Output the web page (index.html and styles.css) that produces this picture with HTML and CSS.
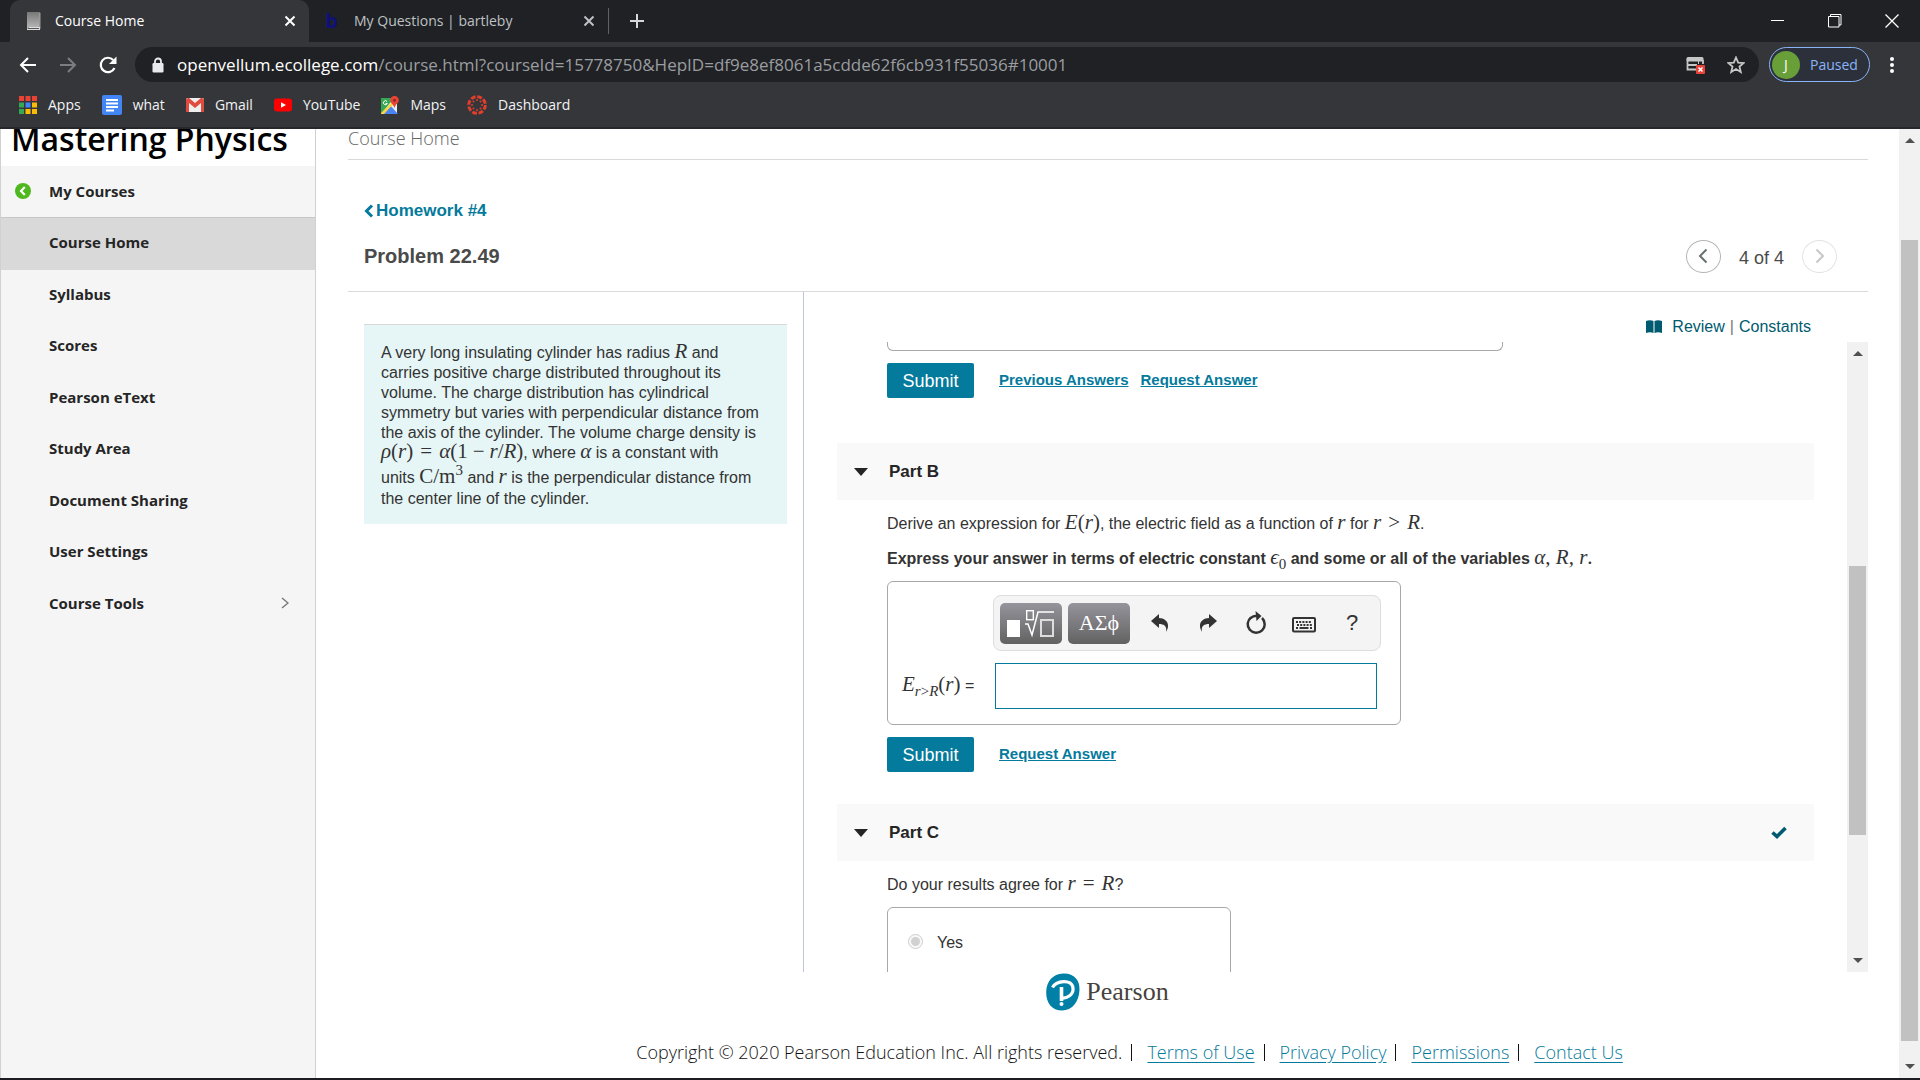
FILE: index.html
```html
<!DOCTYPE html>
<html lang="en">
<head>
<meta charset="utf-8">
<title>Course Home</title>
<link rel="stylesheet" href="styles.css">
</head>
<body>
<header class="browser">
  <div class="tabstrip">
    <div class="tab tab-active">
      <svg class="tab-icon" width="16" height="20" viewBox="0 0 16 20"><defs><linearGradient id="bk" x1="0" y1="0" x2="0" y2="1"><stop offset="0" stop-color="#777"/><stop offset="1" stop-color="#bbb"/></linearGradient></defs><path d="M1 1h12v15H3l-2 2z" fill="url(#bk)"/><path d="M13 1l1.500 1v16H13z" fill="#999"/><path d="M1 18l2-2h11v3H1z" fill="#ddd"/><path d="M2 17.500h11" stroke="#555"/></svg>
      <span class="tab-title">Course Home</span>
      <button class="icon-btn" aria-label="Close tab"><svg width="12" height="12" viewBox="0 0 12 12"><path d="M1.500 1.500l9 9M10.500 1.500l-9 9" stroke="#fff" stroke-width="2"/></svg></button>
    </div>
    <div class="tab">
      <span class="tab-icon tab-b">b</span>
      <span class="tab-title">My Questions | bartleby</span>
      <button class="icon-btn" aria-label="Close tab"><svg width="12" height="12" viewBox="0 0 12 12"><path d="M1.500 1.500l9 9M10.500 1.500l-9 9" stroke="#bdc1c6" stroke-width="2"/></svg></button>
    </div>
    <button class="icon-btn new-tab" aria-label="New tab"><svg width="16" height="16" viewBox="0 0 16 16"><path d="M8 1v14M1 8h14" stroke="#d5d7da" stroke-width="2"/></svg></button>
    <div class="window-controls">
      <button class="icon-btn" aria-label="Minimize"><svg width="14" height="14" viewBox="0 0 14 14"><path d="M0 6.500h13" stroke="#fff"/></svg></button>
      <button class="icon-btn" aria-label="Restore"><svg width="14" height="14" viewBox="0 0 14 14"><path d="M.5 2.500h10.500v10.500H.5zM2.500 2.500v-2h10.500v10.500h-2" fill="none" stroke="#fff"/></svg></button>
      <button class="icon-btn" aria-label="Close"><svg width="14" height="14" viewBox="0 0 14 14"><path d="M.5.500l13 13M13.500.500l-13 13" stroke="#fff" stroke-width="1.300"/></svg></button>
    </div>
  </div>
  <div class="toolbar">
    <button class="icon-btn" aria-label="Back"><svg width="18" height="18" viewBox="0 0 18 18"><path d="M17 9H2M9 2L2 9l7 7" fill="none" stroke="#fff" stroke-width="2"/></svg></button>
    <button class="icon-btn" aria-label="Forward"><svg width="18" height="18" viewBox="0 0 18 18"><path d="M1 9h15M9 2l7 7-7 7" fill="none" stroke="#7b7d80" stroke-width="2"/></svg></button>
    <button class="icon-btn" aria-label="Reload"><svg width="18" height="18" viewBox="0 0 18 18"><path d="M15.500 12A7.200 7.200 0 1 1 14.200 4" fill="none" stroke="#fff" stroke-width="2.200"/><path d="M17.500.5v7.500H10z" fill="#fff"/></svg></button>
    <div class="omnibox">
      <svg class="lock" width="12" height="16" viewBox="0 0 12 16"><path d="M3 7V4.500a3 3 0 0 1 6 0V7" fill="none" stroke="#e8eaed" stroke-width="1.800"/><rect x="0.500" y="6" width="11" height="9.500" rx="1.200" fill="#e8eaed"/></svg>
      <span class="url"><b>openvellum.ecollege.com</b>/course.html?courseId=15778750&amp;HepID=df9e8ef8061a5cdde62f6cb931f55036#10001</span>
      <button class="icon-btn" aria-label="Cookies blocked"><svg width="19" height="18" viewBox="0 0 19 18"><path d="M1.500 3v10.500H11M1 9h10M17 4v4" fill="none" stroke="#c4c7c5" stroke-width="1.800"/><rect x="0.500" y="1" width="17" height="4.500" rx="1.500" fill="#c4c7c5"/><path d="M12.500 5v3" stroke="#c4c7c5"/><rect x="10" y="9" width="9" height="9" rx="1" fill="#e8433a"/><path d="M12.500 11.500l4 4M16.500 11.500l-4 4" stroke="#fff" stroke-width="1.500"/></svg></button>
      <button class="icon-btn" aria-label="Bookmark"><svg width="18" height="18" viewBox="0 0 18 18"><path d="M9 1.500l2.200 5.100 5.500.4-4.200 3.600 1.300 5.400L9 13.100 4.200 16l1.300-5.400L1.300 7l5.500-.4z" fill="none" stroke="#c4c7c5" stroke-width="1.800"/></svg></button>
    </div>
    <button class="profile"><span class="avatar">J</span>Paused</button>
    <button class="icon-btn menu" aria-label="Menu"><svg width="4" height="16" viewBox="0 0 4 16"><circle cx="2" cy="2" r="2" fill="#fff"/><circle cx="2" cy="8" r="2" fill="#fff"/><circle cx="2" cy="14" r="2" fill="#fff"/></svg></button>
  </div>
  <nav class="bookmarks">
    <a href="#"><svg width="18" height="18" viewBox="0 0 18 18"><path d="M0 0h5v5H0zM6.500 0h5v5h-5zM13 0h5v5h-5z" fill="#ea4335"/><path d="M0 6.500h5v5H0zM0 13h5v5H0z" fill="#34a853"/><path d="M6.500 6.500h5v5h-5z" fill="#4285f4"/><path d="M13 6.500h5v5h-5zM6.500 13h5v5h-5zM13 13h5v5h-5z" fill="#fbbc05"/></svg>Apps</a>
    <a href="#"><svg width="20" height="20" viewBox="0 0 20 20"><rect width="20" height="20" rx="2" fill="#4285f4"/><path d="M4 5h12M4 8.500h12M4 12h12M4 15.500h8" stroke="#fff" stroke-width="1.800"/></svg>what</a>
    <a href="#"><svg width="18" height="18" viewBox="0 0 18 18"><rect y="2" width="18" height="14" rx="1.500" fill="#eee"/><path d="M0 3.500V16h3V7l6 5 6-5v9h3V3.500Q17 1.500 15 2L9 7 3 2Q1 1.500 0 3.500z" fill="#e04a3f"/></svg>Gmail</a>
    <a href="#"><svg width="18" height="18" viewBox="0 0 18 18"><rect y="2.500" width="18" height="13" rx="3" fill="#f00"/><path d="M7 6.200v5.600L12 9z" fill="#fff"/></svg>YouTube</a>
    <a href="#"><svg width="18" height="18" viewBox="0 0 18 18"><rect x="0" y="2" width="16" height="16" rx="1" fill="#eceff1"/><path d="M0 2h13L1 17H0z" fill="#34a853"/><path d="M0 18L9 9l8 9z" fill="#4a84f4"/><path d="M0 17L11 6l2 2L3 18H0z" fill="#fdd446"/><path d="M4 18L9.500 11l5 7z" fill="#4a84f4"/><path d="M13.500 0a4.200 4.200 0 0 0-4.200 4.300c0 3 3.200 3.700 4.200 8 1-4.300 4.300-5 4.300-8A4.200 4.200 0 0 0 13.500 0z" fill="#ea4335"/><circle cx="13.500" cy="4.300" r="1.500" fill="#8c2a22"/><path d="M6 5.500a2 2 0 1 0 .3 2H4.500" stroke="#fff" fill="none"/></svg>Maps</a>
    <a href="#"><svg width="20" height="20" viewBox="0 0 20 20"><circle cx="10" cy="10" r="8.300" fill="none" stroke="#e13f2b" stroke-width="3" stroke-dasharray="4.800 1.720"/><g fill="#e13f2b"><circle cx="10" cy="5" r="1"/><circle cx="10" cy="15" r="1"/><circle cx="5" cy="10" r="1"/><circle cx="15" cy="10" r="1"/><circle cx="6.500" cy="6.500" r="1"/><circle cx="13.500" cy="6.500" r="1"/><circle cx="6.500" cy="13.500" r="1"/><circle cx="13.500" cy="13.500" r="1"/></g></svg>Dashboard</a>
  </nav>
</header>

<div class="page">
  <aside class="sidebar">
    <h1 class="brand">Mastering Physics</h1>
    <a class="my-courses" href="#"><svg width="16" height="16" viewBox="0 0 16 16"><circle cx="8" cy="8" r="8" fill="#4fb81f"/><path d="M9.800 4L6 8l3.800 4" fill="none" stroke="#fff" stroke-width="2.200"/></svg>My Courses</a>
    <nav class="side-nav">
      <a class="current" href="#">Course Home</a>
      <a href="#">Syllabus</a>
      <a href="#">Scores</a>
      <a href="#">Pearson eText</a>
      <a href="#">Study Area</a>
      <a href="#">Document Sharing</a>
      <a href="#">User Settings</a>
      <a href="#">Course Tools<svg width="8" height="12" viewBox="0 0 8 12"><path d="M1 1l6 5-6 5" fill="none" stroke="#777" stroke-width="1.400"/></svg></a>
    </nav>
  </aside>

  <main class="content">
    <h2 class="page-title">Course Home</h2>
    <section class="problem-head">
      <a class="back-link" href="#"><svg width="10" height="14" viewBox="0 0 10 14"><path d="M8 1.500L2.500 7 8 12.500" fill="none" stroke="#047a9c" stroke-width="3"/></svg>Homework #4</a>
      <div class="problem-row">
        <h3>Problem 22.49</h3>
        <div class="pager">
          <button aria-label="Previous"><svg width="10" height="16" viewBox="0 0 10 16"><path d="M8.500 1.500L2 8l6.500 6.500" fill="none" stroke="#6a7070" stroke-width="2"/></svg></button>
          <span>4 of 4</span>
          <button disabled aria-label="Next"><svg width="10" height="16" viewBox="0 0 10 16"><path d="M1.500 1.500L8 8l-6.500 6.500" fill="none" stroke="#c7c7c7" stroke-width="2"/></svg></button>
        </div>
      </div>
    </section>

    <div class="workspace">
      <div class="statement-col">
        <p class="statement">A very long insulating cylinder has radius <i class="m">R</i> and carries positive charge distributed throughout its volume. The charge distribution has cylindrical symmetry but varies with perpendicular distance from the axis of the cylinder. The volume charge density is <span class="m nowrap"><i>ρ</i>(<i>r</i>)<span class="rel">=</span><i>α</i>(1<span class="bin">−</span><i>r</i>/<i>R</i>)</span>, where <i class="m">α</i> is a constant with<br>units <span class="m cubed">C/m<sup>3</sup></span> and <i class="m">r</i> is the perpendicular distance from the center line of the cylinder.</p>
      </div>
      <div class="parts-col">
        <div class="refs"><svg width="16" height="14" viewBox="0 0 16 14"><path d="M0 1q4-1.500 7.500 0v12q-3.500-1.300-7.500 0zM8.500 1q3.500-1.500 7.500 0v12q-4-1.300-7.500 0z" fill="#005a70"/></svg><a href="#">Review</a><span>|</span><a href="#">Constants</a></div>
        <div class="scroller">
          <div class="parts">
            <div class="answer-tail"></div>
            <div class="actions"><button class="submit">Submit</button><a href="#">Previous Answers</a><a href="#">Request Answer</a></div>

            <h4 class="part-head"><svg class="caret" width="14" height="8" viewBox="0 0 14 8"><path d="M0 0h14L7 8z" fill="#252525"/></svg>Part B</h4>
            <div class="part-body">
              <p class="question">Derive an expression for <span class="m"><i>E</i>(<i>r</i>)</span>, the electric field as a function of <i class="m">r</i> for <span class="m"><i>r</i><span class="rel">&gt;</span><i>R</i></span>.</p>
              <p class="hint">Express your answer in terms of electric constant <span class="m"><i>ϵ</i><sub>0</sub></span> and some or all of the variables <span class="m"><i>α</i>, <i>R</i>, <i>r</i>.</span></p>
              <div class="answer-box">
                <div class="mathbar">
                  <button class="palette" aria-label="Templates"><svg width="50" height="30" viewBox="0 0 50 30"><rect x="1" y="12" width="13" height="17" fill="#fff"/><path d="M19 16h3l4 11 6-23h16" fill="none" stroke="#fff" stroke-width="1.500"/><rect x="20.700" y="2.700" width="6.600" height="9" fill="none" stroke="#fff" stroke-width="1.400"/><rect x="35" y="12" width="12" height="16" fill="none" stroke="#ddd" stroke-width="2"/></svg></button>
                  <button class="palette">ΑΣϕ</button>
                  <button class="tool" aria-label="Undo"><svg width="18" height="20" viewBox="0 0 18 20"><path d="M0 8l8-7v4c7 0 12 6 7 14 1-5-1-8-7-8v4z" fill="#333"/></svg></button>
                  <button class="tool" aria-label="Redo"><svg width="18" height="20" viewBox="0 0 18 20"><path d="M18 8l-8-7v4C3 5-2 11 3 19c-1-5 1-8 7-8v4z" fill="#333"/></svg></button>
                  <button class="tool" aria-label="Reset"><svg width="20" height="24" viewBox="0 0 20 24"><path d="M5 6.500A8.500 8.500 0 1 0 16 7" fill="none" stroke="#333" stroke-width="2.500"/><path d="M9.500 0l6 5-5 5z" fill="#333"/><path d="M4.500 7.200Q7 4.800 11 4.800" fill="none" stroke="#333" stroke-width="2.500"/></svg></button>
                  <button class="tool" aria-label="Keyboard shortcuts"><svg width="24" height="20" viewBox="0 0 24 20"><rect x="1" y="5" width="22" height="13.500" rx="1" fill="none" stroke="#333" stroke-width="2"/><path d="M4 9h16M5 12h15M4 15h2M18 15h2" stroke="#333" stroke-width="2" stroke-dasharray="2 1.200"/><path d="M7.500 15h9" stroke="#333" stroke-width="2"/></svg></button>
                  <button class="tool help" aria-label="Help">?</button>
                </div>
                <label for="answer"><span class="m"><i>E</i><sub><i>r</i>&gt;<i>R</i></sub>(<i>r</i>)</span> =</label>
                <input id="answer" type="text">
              </div>
              <div class="actions"><button class="submit">Submit</button><a href="#">Request Answer</a></div>
            </div>

            <h4 class="part-head"><svg class="caret" width="14" height="8" viewBox="0 0 14 8"><path d="M0 0h14L7 8z" fill="#252525"/></svg>Part C<svg class="done" width="16" height="13" viewBox="0 0 16 13"><path d="M1.500 6.500l4.500 4L14.500 2" fill="none" stroke="#005a70" stroke-width="3.600"/></svg></h4>
            <div class="part-body">
              <p class="question">Do your results agree for <span class="m"><i>r</i><span class="rel">=</span><i>R</i></span>?</p>
              <div class="choices">
                <label><input type="radio" name="agree" checked disabled>Yes</label>
                <label><input type="radio" name="agree" aria-label="No" disabled></label>
              </div>
            </div>
          </div>
          <div class="scrollbar"><span class="arrow up"></span><span class="thumb"></span><span class="arrow down"></span></div>
        </div>
      </div>
    </div>

    <footer class="footer">
      <div class="pearson"><svg width="34" height="38" viewBox="0 0 34 38"><path d="M17 .5C28 0 34 7 33.500 17 33 29 26 37.500 16 37.500 6 37.500 0 30 .2 19 .5 8 7 1 17 .5z" fill="#0080a7"/><path d="M6.500 14.500C10 7.500 26 5.500 27 15c.7 7-6 10.500-11.500 10" fill="none" stroke="#fff" stroke-width="3.200"/><path d="M15.500 14v14" stroke="#fff" stroke-width="3.600"/><circle cx="15.500" cy="31" r="2" fill="#fff"/></svg><span>Pearson</span></div>
      <div class="legal"><span class="copyright">Copyright © 2020 Pearson Education Inc. All rights reserved.</span><a href="#">Terms of Use</a><a href="#">Privacy Policy</a><a href="#">Permissions</a><a href="#">Contact Us</a></div>
    </footer>
  </main>
  <div class="scrollbar page-scroll"><span class="arrow up"></span><span class="thumb"></span><span class="arrow down"></span></div>
</div>
</body>
</html>
```
FILE: styles.css
```css
* { box-sizing: border-box; }
body {
  margin: 0;
  height: 100vh;
  display: flex;
  flex-direction: column;
  border-bottom: 2px solid #1d1c21;
  background: #fff;
  color: #333;
  font: 16px/20px "Liberation Sans", Arial, sans-serif;
  overflow: hidden;
}
h1, h2, h3, h4, p { margin: 0; }
a { color: inherit; text-decoration: none; }
svg { display: block; flex: none; }
button { font: inherit; cursor: pointer; }
.icon-btn { display: flex; align-items: center; justify-content: center; padding: 0; border: 0; background: none; }

/* Browser frame */
.browser { flex: none; background: #35363a; border-bottom: 2px solid #27282b; font-family: "Open Sans", "Noto Sans", sans-serif; font-size: 15px; color: #f1f3f4; }
.tabstrip { display: flex; align-items: center; height: 42px; padding-left: 10px; background: #202124; color: #bdc1c6; }
.tab { display: flex; align-items: center; width: 299px; height: 42px; padding: 0 13px 0 16px; font-size: 14px; }
.tab-active { background: #35363a; color: #fff; border-radius: 10px 10px 0 0; }
.tab-icon { width: 16px; margin-right: 13px; }
.tab-b { color: #10107c; font: bold 20px/20px "Open Sans", sans-serif; }
.tab-title { flex: 1; white-space: nowrap; }
.new-tab { width: 56px; height: 26px; border-left: 1px solid #5f6165; }
.window-controls { display: flex; margin-left: auto; }
.window-controls .icon-btn { width: 57px; height: 38px; }
.toolbar { display: flex; align-items: center; height: 45px; padding: 0 26px 0 19px; gap: 22px; }
.omnibox { flex: 1; display: flex; align-items: center; gap: 22px; height: 35px; margin-left: -4px; margin-right: -12px; padding: 0 14px 0 17px; border-radius: 18px; background: #202124; }
.lock { margin-right: -9px; }
.url { flex: 1; font-size: 17px; color: #9a9da1; white-space: nowrap; }
.url b { font-weight: 400; color: #fff; }
.profile { display: flex; align-items: center; gap: 10px; width: 101px; height: 35px; padding: 0 0 0 2px; border: 1px solid #8ab4f8; border-radius: 18px; background: #2b303b; color: #8ab4f8; font-size: 14px; }
.avatar { width: 28px; height: 28px; border-radius: 50%; background: #689f38; color: #fff; line-height: 28px; text-align: center; }
.menu { margin-left: -2px; }
.bookmarks { display: flex; align-items: center; gap: 21px; height: 40px; padding: 0 19px 4px; }
.bookmarks a { display: flex; align-items: center; gap: 11px; font-size: 14px; }

/* Page frame */
.page { flex: 1; min-height: 0; display: flex; background: #fff; overflow: hidden; }
.sidebar { flex: none; width: 316px; border: solid #d1d1d1; border-width: 0 1px; background: #f5f5f5; font-family: "Open Sans", sans-serif; color: #252525; }
.brand { display: flex; align-items: flex-end; height: 37px; padding: 0 10px 7px; background: #fff; color: #000; font-size: 32px; font-weight: 600; line-height: 40px; white-space: nowrap; overflow: hidden; }
.my-courses { display: flex; align-items: center; gap: 18px; height: 52px; padding: 0 0 2px 14px; border-bottom: 1px solid #c7c7c7; font-size: 15px; font-weight: 700; }
.side-nav { display: grid; grid-auto-rows: 1fr; height: 412px; font-size: 15px; font-weight: 700; }
.side-nav a { display: flex; align-items: center; justify-content: space-between; padding: 0 26px 3px 48px; }
.side-nav .current { background: #d9d9d9; }
.content { flex: 1; min-width: 0; display: flex; flex-direction: column; padding: 0 31px 0 32px; }
.page-title { height: 31px; border-bottom: 1px solid #d9d9d9; color: #666; font: 300 18px/19px "Open Sans", sans-serif; }
.problem-head { height: 132px; padding: 41px 31px 0 16px; border-bottom: 1px solid #d9d9d9; }
.back-link { display: flex; align-items: center; gap: 2px; color: #047a9c; font-size: 17px; font-weight: 700; }
.problem-row { display: flex; align-items: center; justify-content: space-between; height: 34px; margin-top: 18px; }
.problem-row h3 { color: #4a4a4a; font-size: 20px; }
.pager { display: flex; align-items: center; gap: 18px; font-size: 18px; color: #4a4a4a; }
.pager span { padding-top: 4px; }
.pager button { display: flex; align-items: center; justify-content: center; width: 35px; height: 33px; padding: 0; border: 1px solid #b5b5b5; border-radius: 50%; background: #fff; }
.pager button:disabled { border-color: #e3e3e3; }

/* Problem workspace */
.workspace { flex: 1; min-height: 0; display: flex; }
.statement-col { flex: none; width: 456px; padding: 32px 16px 0; border-right: 1px solid #b9c7d9; }
.statement { padding: 18px 21px 15px 17px; border-top: 1px solid #d9d9d9; background: #e6f6f6; }
.m { font-family: "Liberation Serif", "Times New Roman", serif; font-size: 21px; line-height: 16px; }
.m sub, .m sup { font-size: 15px; line-height: 0; }
.m .rel { margin: 0 7px; }
.m .bin { margin: 0 5px; }
.m.cubed { line-height: 26px; }
.nowrap { white-space: nowrap; }
.parts-col { flex: 1; min-width: 0; display: flex; flex-direction: column; }
.refs { display: flex; align-items: center; justify-content: flex-end; gap: 5px; height: 50px; padding: 20px 57px 0 0; color: #777; }
.refs svg { margin-right: 5px; }
.refs a { color: #005a70; }
.scroller { flex: 1; min-height: 0; display: flex; justify-content: space-between; }
.parts { flex: 1; padding: 0 33px; overflow: hidden; }
.answer-tail { width: 616px; height: 9px; margin-left: 50px; border: 1px solid #a6a8ab; border-top: 0; border-radius: 0 0 6px 6px; }
.actions { display: flex; align-items: center; gap: 12px; height: 35px; margin-top: 12px; padding-bottom: 2px; color: #047a9c; font-size: 15px; font-weight: 700; }
.parts > .actions { margin-left: 50px; }
.actions a { text-decoration: underline; }
.submit { width: 87px; height: 35px; margin: 0 13px -2px 0; padding: 0; border: 0; border-radius: 2px; background: #047a9c; color: #fff; font-size: 18px; font-weight: 400; }
.part-head { display: flex; align-items: center; height: 57px; margin-top: 45px; padding: 0 27px 0 17px; background: #f9f9f9; color: #252525; font-size: 17px; }
.caret { margin-right: 21px; }
.done { margin-left: auto; }
.part-body { padding: 14px 0 0 50px; }
.part-body + .part-head { margin-top: 32px; }
.hint { margin-top: 15px; font-weight: 700; }
.hint .m { font-weight: 400; }
.answer-box { display: grid; grid-template-columns: 79px 388px; grid-template-rows: 56px 46px; align-items: center; gap: 12px; width: 514px; height: 144px; margin-top: 12px; padding: 13px 12px 0 14px; border: 1px solid #a6a8ab; border-radius: 6px; align-content: start; }
.mathbar { grid-column: 2; display: flex; align-items: center; height: 56px; padding: 0 4px 0 6px; border: 1px solid #ddd; border-radius: 8px; background: #f4f4f4; }
.palette { flex: none; display: flex; align-items: center; justify-content: center; width: 62px; height: 41px; margin-right: 6px; padding: 0; border: 0; border-radius: 5px; background: linear-gradient(#96949c, #626262); color: #fff; font: 22px/30px "Liberation Serif", serif; }
.tool { flex: 1; display: flex; align-items: center; justify-content: center; padding: 0; border: 0; background: none; color: #333; }
.help { font-size: 22px; }
.answer-box input { width: 382px; height: 46px; margin-left: 2px; border: 1px solid #047a9c; background: #fff; font: inherit; }
.answer-box label { white-space: nowrap; }
.choices { width: 344px; margin-top: 12px; padding: 25px 20px; border: 1px solid #a6a8ab; border-radius: 6px; }
.choices label { display: flex; align-items: center; gap: 14px; height: 19px; margin-bottom: 19px; font-size: 16px; }
.choices input { width: 15px; height: 15px; margin: 0 0 2px; }

/* Scroll bars */
.scrollbar { flex: none; display: flex; flex-direction: column; align-items: center; width: 21px; padding: 9px 0; background: #f1f1f1; }
.arrow { border: solid transparent; border-width: 0 5px; }
.up { border-bottom: 5px solid #505050; }
.down { border-top: 5px solid #505050; margin-top: auto; }
.thumb { width: 17px; height: 44%; margin-top: 210px; background: #c1c1c1; }
.page-scroll .thumb { height: 86%; margin-top: 97px; }

/* Footer */
.footer { flex: none; height: 106px; padding-top: 1px; color: #111; font: 300 18px/24px "Open Sans", sans-serif; }
.pearson { display: flex; align-items: center; justify-content: center; gap: 6px; height: 38px; padding-right: 1px; }
.pearson span { color: #47423d; font: 26px/30px "Liberation Serif", serif; }
.legal { display: flex; align-items: center; justify-content: center; margin-top: 29px; padding-left: 43px; }
.legal a { position: relative; margin-left: 25px; color: #047a9c; text-decoration: underline; text-underline-offset: 3px; }
.legal a::before { content: ""; position: absolute; left: -16px; top: 4px; height: 17px; border-left: 1px solid #111; }
```
